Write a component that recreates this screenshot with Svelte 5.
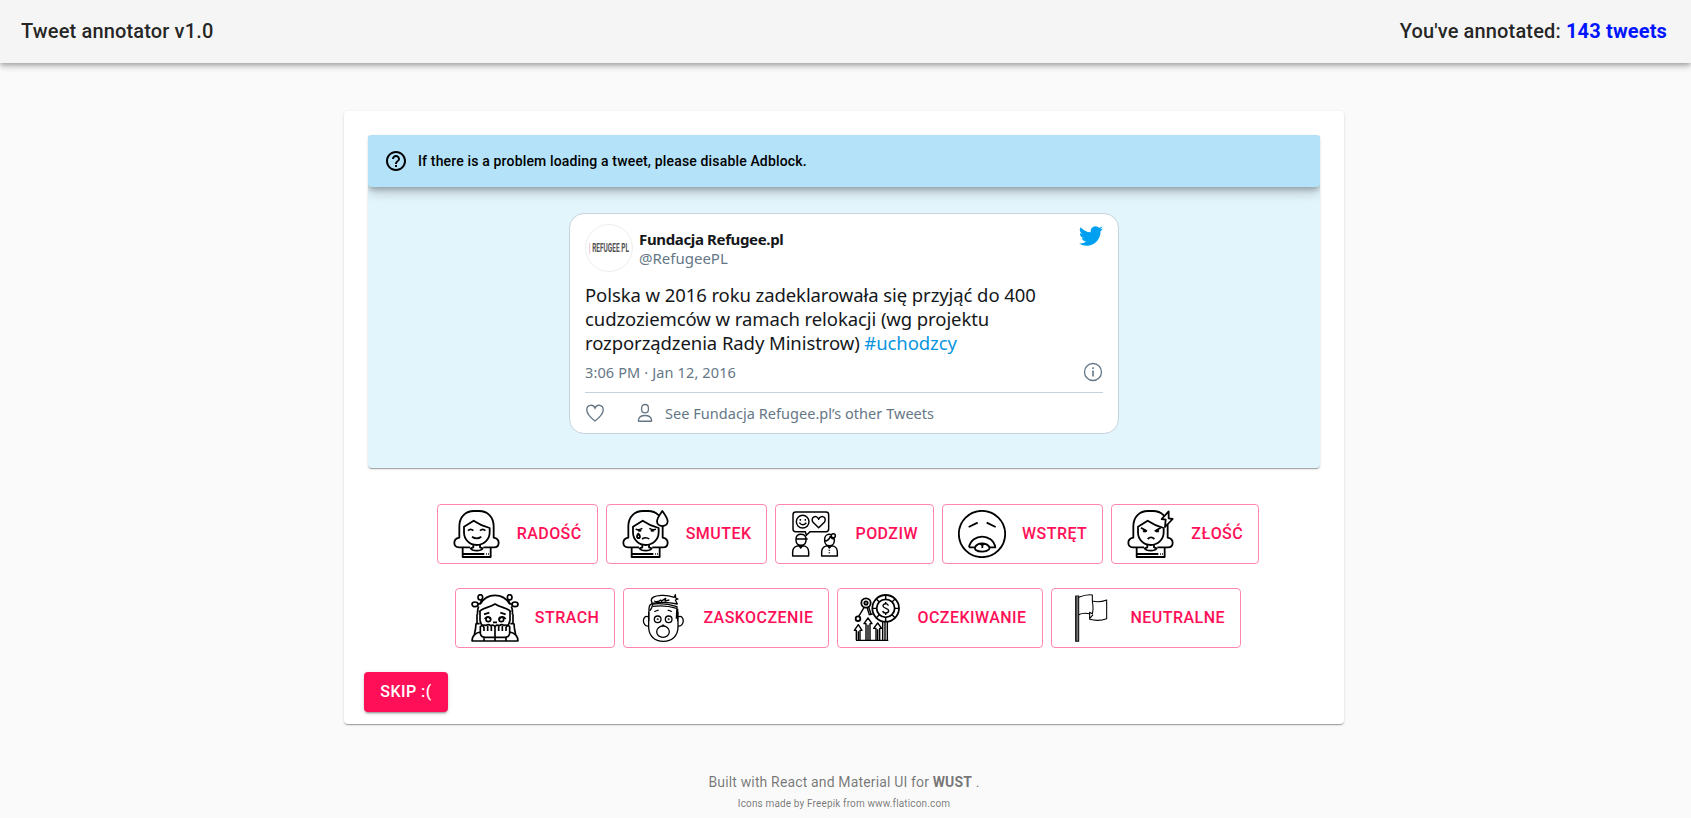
<script>
  const rows = [
    [
      { label: 'RADOŚĆ', icon: 'joy' },
      { label: 'SMUTEK', icon: 'sad' },
      { label: 'PODZIW', icon: 'admire' },
      { label: 'WSTRĘT', icon: 'disgust' },
      { label: 'ZŁOŚĆ', icon: 'anger' }
    ],
    [
      { label: 'STRACH', icon: 'fear' },
      { label: 'ZASKOCZENIE', icon: 'surprise' },
      { label: 'OCZEKIWANIE', icon: 'expect' },
      { label: 'NEUTRALNE', icon: 'neutral' }
    ]
  ];
</script>

{#snippet woman()}
  <path d="M51 112H18C8 112 4 105 4 98c0-8 6-13 15-15V49C19 20 38 3 63 3h15c25 0 44 17 44 46v34c9 2 15 7 15 15 0 7-4 14-14 14H91" />
  <path d="M62 32 33 50v17c0 22 17 38 38 38s39-16 39-38V54Q84 47 62 32Z" />
  <path d="M61 104v8l-8 3q4 7 18 7t18-7l-8-3v-8M29 113v28h84v-28M30 132h64" />
  <path d="M99 132h2M106 132h2" />
{/snippet}

{#snippet emotion(name)}
  <svg class="icon" viewBox="0 0 144 144" fill="none" stroke="#000" stroke-width="5.4" stroke-linejoin="round">
    {#if name === 'joy'}
      {@render woman()}
      <path d="M45 62q8-8 16 0M81 62q8-8 16 0M57 80q14 10 28 0" />
    {:else if name === 'sad'}
      {@render woman()}
      <path d="M41 58q10 3 20-3M82 55q10 6 20 3M60 87q12-8 22 0" stroke-width="4.600" />
      <path d="M49 60h8v4h-8zM87 60h8v4h-8z" fill="#000" stroke-width="2" />
      <path d="M49 71q-7 9-2 13h5q5-4-3-13Z" />
      <path d="M121 3q-16 22-16 31c0 19 32 19 32 0q0-9-16-31Z" fill="#fff" />
    {:else if name === 'anger'}
      {@render woman()}
      <path d="m42 53 18 11M101 53 83 64M62 87q10-10 20 0" />
      <path d="M49 60h8v6h-8zM87 60h8v6h-8z" fill="#000" stroke-width="2" />
      <path d="m125 4-21 23 12 2-2 22 23-24-12-2Z" fill="#fff" />
    {:else if name === 'admire'}
      <g stroke-width="4.400">
        <path d="M14 6h91q8 0 8 8v43q0 8-8 8H57L46 76l-3-11H14q-8 0-8-8V14q0-8 8-8Z" />
        <circle cx="35" cy="35" r="19" />
        <path d="M28 27v5M43 27v5M25 38q10 13 21 0M83 53 66 37c-10-16 12-25 17-9 6-16 27-7 17 9Z" />
        <path d="M5 138v-13c0-11 9-18 19-18h10c12 0 19 8 19 18v13ZM24 107l5 7 6-7M15 88c0-9 6-15 15-15s14 5 15 12v6c0 20-30 20-30 0ZM15 87h35" />
        <path d="M92 138v-13c0-11 9-18 19-18h9c12 0 19 8 19 18v13ZM110 107l5 7 6-7M101 88c0-9 6-15 14-15s15 6 15 15v4c0 20-29 20-29 0ZM101 94q13-2 17-15 4 8 12 9M115 119v3M115 127v3" />
        <circle cx="127" cy="77" r="6" fill="#fff" />
      </g>
    {:else if name === 'disgust'}
      <circle cx="72" cy="72" r="69.500" />
      <path d="m32 51 27-13M86 38l27 13M33 112c8-43 71-43 79 0H94M51 112H33M51 112q5-12 21-12t22 12M60 103c-22 16 0 22 13 22s34-9 13-22q-7-4-13 3-6-7-13-3ZM73 106v8" />
    {:else if name === 'fear'}
      <g stroke-width="5">
        <path d="M27 31C38 12 50 4 72 4s34 8 45 27M25 54c3-12 30-12 47-24 17 12 44 12 47 24M23 37q-5 12-3 25M121 37q5 12 3 25M27 50v29q2 13 12 20M117 50v29q-2 13-12 20M18 61v28h8M126 61v28h-8M15 88q0 14-5 34M129 88q0 14 5 34" />
        <ellipse cx="28" cy="10" rx="7" ry="8" /><ellipse cx="12" cy="31" rx="9" ry="7" /><path d="m31 18-2 9-9 5" />
        <ellipse cx="116" cy="10" rx="7" ry="8" /><ellipse cx="132" cy="31" rx="9" ry="7" /><path d="m113 18 2 9 9 5" />
        <path d="m39 61 16-5M88 56l16 5M41 75q10-14 19 2M84 77q9-16 20-2M66 85h12" />
        <circle cx="52" cy="76" r="7" /><circle cx="91" cy="76" r="7" />
        <path d="M72 98v44M28 98q7-7 17-4 8-5 14 1 8-5 13 3 5-8 13-3 6-6 14-1 10-3 17 4v20q-2 12-15 12H43q-13 0-15-12ZM39 98v13M50 96v15M61 96v15M83 96v15M94 96v15M105 98v13M2 141h140M3 142q0-23 25-28M141 142q0-23-25-28M39 130v12M105 130v12" />
      </g>
    {:else if name === 'surprise'}
      <g stroke-width="3.900">
        <path d="M29 53v46c0 26 18 43 44 43s44-17 44-43V53M29 69c-21-10-21 31 0 27M117 69c21-10 21 31 0 27M30 82V42q1-10 9-14M116 82V44M33 50q7-9 8-20 38-4 73 8l-2 36" />
        <path d="M40 28C29 9 50 5 67 4c16-1 28 2 39 6l3-8 1 10 7 3-8 3 6 12q-38-9-75-2M45 21q12 5 22-4M66 22l14-9-2 8 13-3M41 37q38-5 72 6" />
        <circle cx="56" cy="76" r="10" /><circle cx="89" cy="76" r="10" />
        <circle cx="56" cy="76" r="1" /><circle cx="89" cy="76" r="1" />
        <path d="M46 53q7-5 13-4M86 49q7-1 12 4M69 95l3-2 4 2" />
        <ellipse cx="72" cy="113" rx="19" ry="17" />
      </g>
    {:else if name === 'expect'}
      <circle cx="98" cy="43" r="40" /><circle cx="98" cy="43" r="27" />
      <path d="M98 3v13M98 70v13M58 43h13M125 43h13M70 15l9 9M126 15l-9 9M70 71l9-9M126 71l-9-9M106 35c-2-9-17-7-16 1s17 6 17 14-16 10-18 1M98 24v6M98 57v6" stroke-width="4.200" />
      <circle cx="39" cy="27" r="14" /><circle cx="39" cy="27" r="5" /><circle cx="15" cy="74" r="7" />
      <path d="m33 41-16 26M47 39l8 24M42 40l7 22 10-2M89 84v55M103 84v55M96 84v55M9 139h97M10 139v-30H4l12-17 11 17h-6v30M39 139V89h-6l12-17 12 17h-6v50M69 139v-36h-7l12-16 12 16h-6v36M16 112v26M45 92v46M74 106v32" stroke-width="4.200" />
    {:else}
      <g stroke-width="3.200">
        <path d="M26 6h9v136h-9ZM30 8v133" />
        <path d="M35 10C50 4 62 1 76 3v18q20 6 43-3v56q-24 9-51 2V59q-20-4-33 3M76 21c3 18 2 32 0 39M76 59l-8-4v19l10-12" />
      </g>
    {/if}
  </svg>
{/snippet}

<header class="appbar">
  <div>Tweet annotator v1.0</div>
  <div>You've annotated: <strong>143 tweets</strong></div>
</header>

<div class="page">
  <main class="paper">
    <section class="panel">
      <div class="notice">
        <svg width="24" height="24" viewBox="0 0 24 24"><path d="M11 18h2v-2h-2v2zm1-16C6.480 2 2 6.480 2 12s4.480 10 10 10 10-4.480 10-10S17.520 2 12 2zm0 18c-4.410 0-8-3.590-8-8s3.590-8 8-8 8 3.590 8 8-3.590 8-8 8zm0-14c-2.210 0-4 1.790-4 4h2c0-1.100.9-2 2-2s2 .9 2 2c0 2-3 1.750-3 5h2c0-2.250 3-2.500 3-5 0-2.210-1.790-4-4-4z" /></svg>
        <span>If there is a problem loading a tweet, please disable Adblock.</span>
      </div>
      <article class="tweet">
        <div class="author">
          <div class="avatar"><span><i>|</i> REFUGEE<i>.</i>PL</span></div>
          <div class="names">
            <b>Fundacja Refugee.pl</b>
            <span>@RefugeePL</span>
          </div>
          <svg class="bird" width="24" height="24" viewBox="0 0 24 24"><path fill="#00a0f0" d="M23.950 4.570a10 10 0 0 1-2.820.770 4.960 4.960 0 0 0 2.160-2.720c-.950.550-2 .950-3.130 1.180a4.920 4.920 0 0 0-8.380 4.480C7.690 8.090 4.070 6.130 1.640 3.160a4.920 4.920 0 0 0 1.520 6.570 4.900 4.900 0 0 1-2.230-.610v.060a4.920 4.920 0 0 0 3.950 4.830 5 5 0 0 1-2.210.080 4.940 4.940 0 0 0 4.600 3.420A9.870 9.870 0 0 1 0 19.540a13.940 13.940 0 0 0 7.550 2.210c9.050 0 14-7.500 14-13.990 0-.210 0-.420-.020-.630a9.940 9.940 0 0 0 2.420-2.560z" /></svg>
        </div>
        <div class="text">
          <p>Polska w 2016 roku zadeklarowała się przyjąć do 400</p>
          <p>cudzoziemców w ramach relokacji (wg projektu</p>
          <p>rozporządzenia Rady Ministrow) <a href="#uchodzcy">#uchodzcy</a></p>
        </div>
        <div class="date">
          <span>3:06 PM · Jan 12, 2016</span>
          <svg width="20" height="20" viewBox="0 0 20 20" fill="none" stroke="#657786" stroke-width="1.300"><circle cx="10" cy="10" r="8.500" /><path d="M10 8.500v6M10 5.200v1.800" stroke-width="1.600" /></svg>
        </div>
        <div class="actions">
          <svg width="20" height="20" viewBox="0 0 20 20" fill="none" stroke="#657786" stroke-width="1.350"><path d="M10 18C6 15 1.800 11 1.800 6.800c0-5.300 6.400-6 8.200-1.600 1.800-4.400 8.200-3.700 8.200 1.600C18.200 11 14 15 10 18Z" /></svg>
          <svg class="person" width="20" height="20" viewBox="0 0 20 20" fill="none" stroke="#657786" stroke-width="1.350"><rect x="6.600" y="1.500" width="6.800" height="8.400" rx="3.400" /><path d="M3.800 18.200q-.5 0-.4-1c.5-3.300 3-4.700 6.600-4.700s6.100 1.400 6.600 4.700q.1 1-.4 1Z" /></svg>
          <span>See Fundacja Refugee.pl’s other Tweets</span>
        </div>
      </article>
    </section>

    <div class="choices">
      {#each rows as row}
        <div class="row">
          {#each row as item}
            <button class="choice">{@render emotion(item.icon)}<span>{item.label}</span></button>
          {/each}
        </div>
      {/each}
    </div>
    <button class="skip">SKIP :(</button>
  </main>

  <footer>
    <p class="built">Built with React and Material UI for <b>WUST</b> .</p>
    <p class="credits">Icons made by Freepik from www.flaticon.com</p>
  </footer>
</div>

<style>
  :global(body) { margin: 0; background: #fafafa; font-family: Roboto, sans-serif; overflow: hidden; }
  p { margin: 0; }
  .appbar {
    box-sizing: border-box; height: 63px; padding: 0 24px 2px 21px;
    display: flex; align-items: center; justify-content: space-between;
    background: #f5f5f5; color: rgba(0, 0, 0, .87);
    font-size: 20px; font-weight: 500; letter-spacing: .0075em;
    box-shadow: 0 2px 4px -1px rgba(0,0,0,.2), 0 4px 5px rgba(0,0,0,.14), 0 1px 10px rgba(0,0,0,.12);
  }
  .appbar strong { color: #0014ff; font-weight: 700; }
  .page { width: 1688px; padding-top: 48px; display: flex; flex-direction: column; align-items: center; }
  .paper {
    box-sizing: border-box; width: 1000px; height: 613px; padding: 24px; border-radius: 4px; background: #fff;
    box-shadow: 0 2px 1px -1px rgba(0,0,0,.2), 0 1px 1px rgba(0,0,0,.14), 0 1px 3px rgba(0,0,0,.12);
  }
  .panel {
    height: 333px; border-radius: 4px; background: #e3f5fc;
    display: flex; flex-direction: column; align-items: center;
    box-shadow: 0 2px 1px -1px rgba(0,0,0,.2), 0 1px 1px rgba(0,0,0,.14), 0 1px 3px rgba(0,0,0,.12);
  }
  .notice {
    box-sizing: border-box; width: 100%; height: 52px; padding: 0 16px; border-radius: 4px;
    display: flex; align-items: center; gap: 10px; background: #b3e2f9;
    font-size: 14px; font-weight: 500; letter-spacing: .0112em;
    box-shadow: 0 3px 5px -1px rgba(0,0,0,.2), 0 6px 10px rgba(0,0,0,.14), 0 1px 18px rgba(0,0,0,.12);
    clip-path: inset(0 0 -30px 0);
  }
  .tweet {
    box-sizing: border-box; width: 550px; height: 221px; margin-top: 26px; padding: 10px 15px 0;
    border: 1px solid #c4d3dc; border-radius: 15px; background: #fff;
    font-family: "Noto Sans", sans-serif; color: #14171a;
  }
  .author { display: flex; align-items: flex-start; height: 48px; }
  .avatar {
    box-sizing: border-box; width: 48px; height: 48px; border: 1px solid #eee; border-radius: 50%;
    display: flex; align-items: center; justify-content: center;
    font: 700 12px/12px Roboto, sans-serif; color: #555; white-space: nowrap;
  }
  .avatar span { transform: scaleX(.54); }
  .avatar i { color: #f08a96; font-style: normal; font-weight: 400; }
  .names { display: flex; flex-direction: column; flex: 1; margin: 6px 0 0 6px; font-size: 15px; line-height: 19px; }
  .names b { letter-spacing: -.36px; }
  .names span { color: #657786; }
  .text { margin-top: 11px; font-size: 18.500px; line-height: 24px; letter-spacing: -.085px; white-space: nowrap; }
  .text a { color: #0a95e0; text-decoration: none; }
  .date { display: flex; align-items: center; justify-content: space-between; height: 34px; color: #657786; font-size: 14.500px; letter-spacing: .13px; }
  .actions {
    display: flex; align-items: center; height: 39px; margin-top: 3px; border-top: 1px solid #c4d3dc;
    color: #657786; font-size: 14.500px; letter-spacing: .04px;
  }
  .person { margin: 0 10px 0 30px; }
  .choices { display: flex; flex-direction: column; gap: 24px; margin-top: 36px; }
  .row { display: flex; justify-content: center; gap: 8px; padding-left: 7.800px; }
  button { font-family: Roboto, sans-serif; font-size: 16px; font-weight: 500; letter-spacing: .02857em; line-height: 28px; border-radius: 4px; }
  .choice {
    display: flex; align-items: center; gap: 16px; padding: 5px 15px;
    border: 1px solid #ff87ab; background: #fff; color: #ff0f57; white-space: nowrap;
  }
  .icon { width: 48px; height: 48px; flex: none; }
  .skip {
    display: block; width: 84px; height: 40px; margin: 24px 0 0 -4px; padding: 6px 16px; border: 0;
    background: #ff0f57; color: #fff; white-space: nowrap;
    box-shadow: 0 3px 1px -2px rgba(0,0,0,.2), 0 2px 2px rgba(0,0,0,.14), 0 1px 5px rgba(0,0,0,.12);
  }
  footer { margin-top: 48px; text-align: center; color: rgba(0, 0, 0, .54); }
  .built { font-size: 14px; line-height: 20px; letter-spacing: .01071em; }
  .credits { margin-top: 2px; font-size: 10px; line-height: 20px; letter-spacing: .014em; }
</style>
